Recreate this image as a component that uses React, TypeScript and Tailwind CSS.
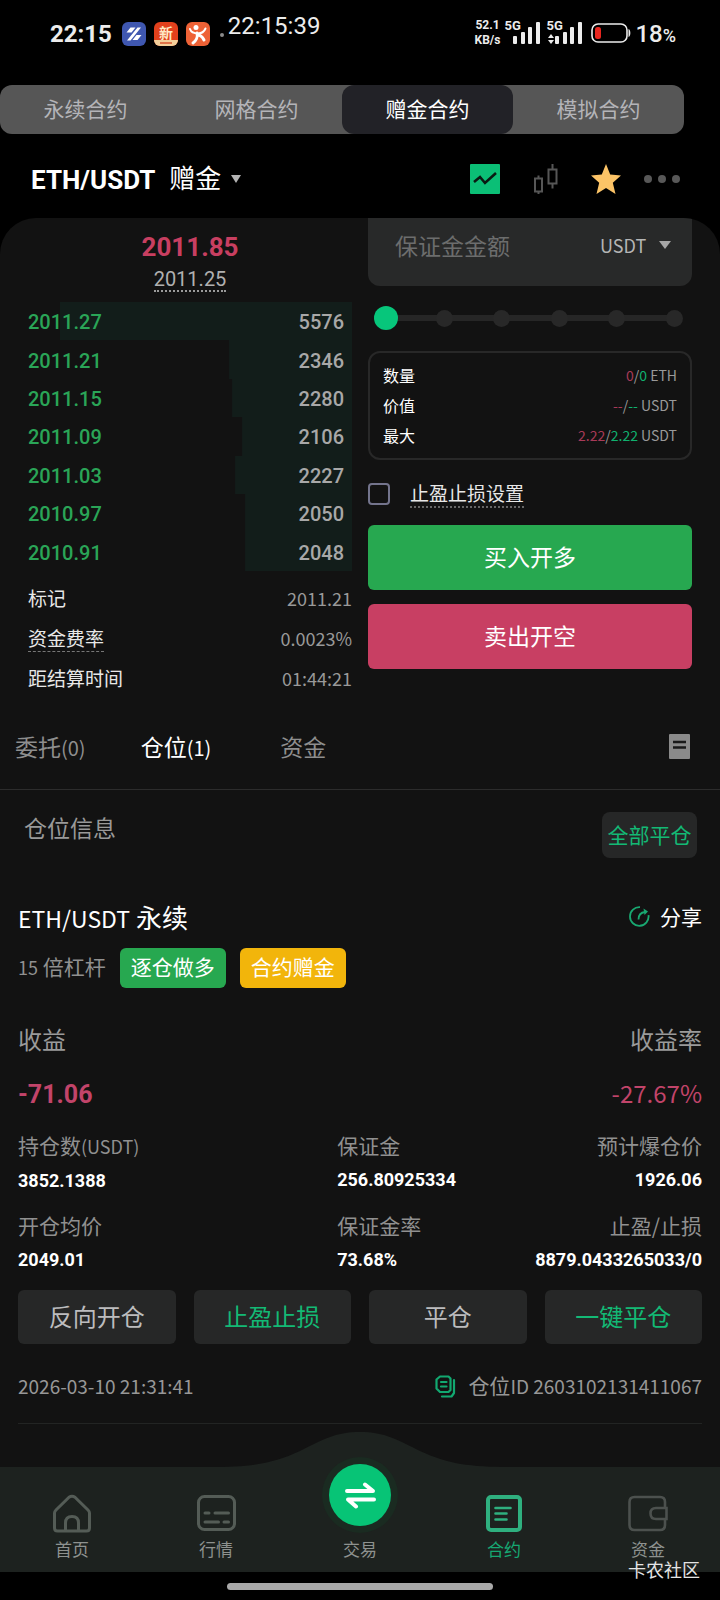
import React, { useState } from "react";

interface Order {
  price: string;
  amount: number;
  depth: number;
}

interface Cell {
  label: React.ReactNode;
  value: string;
}

const contractTabs = ["永续合约", "网格合约", "赠金合约", "模拟合约"];

const orders: Order[] = [
  { price: "2011.27", amount: 5576, depth: 90 },
  { price: "2011.21", amount: 2346, depth: 38 },
  { price: "2011.15", amount: 2280, depth: 37 },
  { price: "2011.09", amount: 2106, depth: 34 },
  { price: "2011.03", amount: 2227, depth: 36 },
  { price: "2010.97", amount: 2050, depth: 33 },
  { price: "2010.91", amount: 2048, depth: 33 },
];

const cells: Cell[] = [
  { label: <>持仓数<span className="text-[18px]">(USDT)</span></>, value: "3852.1388" },
  { label: "保证金", value: "256.80925334" },
  { label: "预计爆仓价", value: "1926.06" },
  { label: "开仓均价", value: "2049.01" },
  { label: "保证金率", value: "73.68%" },
  { label: "止盈/止损", value: "8879.0433265033/0" },
];

const actions = [
  { name: "反向开仓", green: false },
  { name: "止盈止损", green: true },
  { name: "平仓", green: false },
  { name: "一键平仓", green: true },
];

function Signal() {
  return (
    <svg width="27" height="22" viewBox="0 0 27 22" fill="#ececec">
      <rect x="0" y="14" width="4" height="8" rx="1" />
      <rect x="8" y="10" width="4" height="12" rx="1" />
      <rect x="15" y="5" width="4" height="17" rx="1" />
      <rect x="23" y="0" width="4" height="22" rx="1" />
    </svg>
  );
}

function StatusBar() {
  return (
    <div className="flex h-[85px] items-start justify-between pr-11 pl-[50px] font-[Roboto,'Noto_Sans_CJK_SC',sans-serif] text-[#ececec]">
      <div className="flex">
        <span className="mt-[18px] text-[24px] leading-8 font-bold">22:15</span>
        <svg className="mt-[22px] ml-2.5" width="24" height="24" viewBox="0 0 24 24">
          <rect width="24" height="24" rx="6" fill="#3f57b0" />
          <path d="M8.500 5.500h5l-4 5h-5zM15.500 5.500h3.500L8.500 18.500H5zM14.500 13h5l-4 5h-5z" fill="#fff" />
        </svg>
        <svg className="mt-[22px] ml-2" width="24" height="24" viewBox="0 0 24 24">
          <rect width="24" height="24" rx="6" fill="#e2401c" />
          <path d="M0 18h24a6 6 0 0 1-6 6H6a6 6 0 0 1-6-6z" fill="#f3cf9a" />
          <path d="M6 21h12" stroke="#d9542e" strokeWidth="1.500" />
          <text x="12" y="16" textAnchor="middle" fontSize="14" fontWeight="700" fill="#ffe9c4" fontFamily="Noto Sans CJK SC, sans-serif">新</text>
        </svg>
        <svg className="mt-[22px] ml-2" width="24" height="24" viewBox="0 0 24 24" fill="none" stroke="#fff" strokeLinecap="round">
          <rect width="24" height="24" rx="6" fill="#ee6236" stroke="none" />
          <circle cx="10" cy="5.500" r="2.500" fill="#fff" stroke="none" />
          <path d="M4 7c1 3 4 4.500 8 4.500 3 0 6-1.500 7.500-5" strokeWidth="2" />
          <path d="M11 11c1 4-1 8-4 10M11.500 13c3 0 5 2 6.500 5" strokeWidth="3" />
        </svg>
        <span className="mt-[33px] ml-2.5 size-1 rounded-full bg-[#8a8a8a]" />
        <span className="mt-2.5 ml-1 text-[24px] leading-8">22:15:39</span>
      </div>
      <div className="flex">
        <div className="mt-[18px] mr-1 text-[12px] leading-[15px] font-bold">
          <p className="text-center">52.1</p>
          <p>KB/s</p>
        </div>
        <div className="relative mt-[22px] pl-[9px]">
          <span className="absolute -top-1 left-0 text-[13px] leading-[15px] font-bold">5G</span>
          <Signal />
        </div>
        <div className="relative mt-[22px] ml-1.5 pl-[9px]">
          <span className="absolute -top-1 left-0 text-[13px] leading-[15px] font-bold">5G</span>
          <svg className="absolute top-3 left-0.5" width="6" height="10" viewBox="0 0 6 10" fill="#ececec">
            <path d="M3 0l3 4H0zM3 10l3-4H0z" />
          </svg>
          <Signal />
        </div>
        <svg className="mt-[23px] ml-[9px]" width="40" height="20" viewBox="0 0 40 20">
          <rect x="1" y="1" width="35" height="18" rx="6" fill="none" stroke="#ececec" strokeWidth="1.600" />
          <path d="M37.500 6c2.500 1 2.500 7 0 8z" fill="#ececec" />
          <rect x="4" y="4" width="6" height="12" rx="2.500" fill="#e8261f" />
        </svg>
        <span className="mt-[18px] ml-1 text-[24px] leading-8 font-medium">
          18<span className="text-[18px]">%</span>
        </span>
      </div>
    </div>
  );
}

function PairHeader() {
  return (
    <header className="flex h-[84px] items-center justify-between pt-1.5 pr-10 pl-[31px]">
      <h1 className="flex items-center text-[26px] leading-8 text-white">
        <span className="pt-0.5 font-[Roboto,sans-serif] font-bold">ETH/USDT</span>
        <span className="ml-3.5 pb-1">赠金</span>
        <svg className="ml-2.5" width="10" height="8" viewBox="0 0 10 8" fill="#b4b4b4">
          <path d="M0 0h10L5 8z" />
        </svg>
      </h1>
      <div className="flex items-center">
        <button aria-label="走势">
          <svg width="30" height="30" viewBox="0 0 30 30">
            <rect width="30" height="30" rx="1" fill="#0bbf76" />
            <path d="M4 18l6-5 5 6 11-10" fill="none" stroke="#0a1a12" strokeWidth="2.600" />
          </svg>
        </button>
        <button aria-label="K线" className="ml-[33px]">
          <svg width="26" height="30" viewBox="0 0 26 30" fill="none" stroke="#565656" strokeWidth="2">
            <path d="M2 14.500h7v13H2zM5.500 11.500v3M5.500 27.500v2.500M15.500 5.500h8v14h-8zM19.500 0v5.500M19.500 19.500v5" />
          </svg>
        </button>
        <button aria-label="收藏" className="ml-8">
          <svg width="30" height="30" viewBox="0 0 30 30" fill="#fcc467">
            <path d="M15 0l4.200 10.500L30 11.500l-8.200 7.200L24.500 30 15 24 5.500 30l2.700-11.300L0 11.500l10.800-1z" />
          </svg>
        </button>
        <button aria-label="更多" className="ml-[23px]">
          <svg width="36" height="8" viewBox="0 0 36 8" fill="#585858">
            <circle cx="4" cy="4" r="4" />
            <circle cx="18" cy="4" r="4" />
            <circle cx="32" cy="4" r="4" />
          </svg>
        </button>
      </div>
    </header>
  );
}

function OrderBook() {
  return (
    <div className="pt-3.5">
      <div className="flex flex-col items-center font-[Roboto,sans-serif]">
        <p className="text-[26px] leading-[30px] font-bold text-[#c83f61]">2011.85</p>
        <p className="mt-1.5 border-b-2 border-dotted border-[#9a9a9a] text-[20px] leading-[22px] text-[#b0b0b0]">2011.25</p>
      </div>
      <table className="mt-2.5 h-[269px] w-full font-[Roboto,sans-serif] text-[20px] leading-6 font-medium">
        <tbody>
          {orders.map((o) => (
            <tr
              key={o.price}
              style={{
                background: `linear-gradient(to left, #121d1a ${o.depth}%, transparent ${o.depth}%)`,
              }}
            >
              <td className="p-0 pt-0.5 text-[#2aa557]">{o.price}</td>
              <td className="p-0 pt-0.5 pr-2 text-right text-[#a8a8a8]">{o.amount}</td>
            </tr>
          ))}
        </tbody>
      </table>
      <dl className="mt-[7px] text-[19px] text-[#e8e8e8]">
        <div className="flex h-10 items-center justify-between">
          <dt>标记</dt>
          <dd className="text-[18px] text-[#999999]">2011.21</dd>
        </div>
        <div className="flex h-10 items-center justify-between">
          <dt className="border-b border-dashed border-[#777777] leading-[26px]">资金费率</dt>
          <dd className="text-[18px] text-[#999999]">0.0023%</dd>
        </div>
        <div className="flex h-10 items-center justify-between">
          <dt>距结算时间</dt>
          <dd className="text-[18px] text-[#999999]">01:44:21</dd>
        </div>
      </dl>
    </div>
  );
}

function OrderForm() {
  const [margin, setMargin] = useState<string>("");
  const [percent, setPercent] = useState<number>(0);
  const [stop, setStop] = useState<boolean>(false);

  return (
    <div>
      <div className="flex h-[68px] items-center rounded-b-xl bg-[#282929] pr-[21px] pb-3.5 pl-[27px]">
        <input
          aria-label="保证金金额"
          placeholder="保证金金额"
          value={margin}
          onChange={(e) => setMargin(e.target.value)}
          className="w-0 min-w-0 flex-1 bg-transparent text-[23px] leading-8 text-white outline-none placeholder:text-[#6c6d6d]"
        />
        <select aria-label="单位" className="appearance-none bg-transparent text-[18px] leading-8 text-[#b5b5b5] outline-none">
          <option>USDT</option>
        </select>
        <svg className="ml-3" width="12" height="8" viewBox="0 0 12 8" fill="#a6a6a6">
          <path d="M0 0h12L6 8z" />
        </svg>
      </div>

      <div className="relative mt-5 mr-[9px] ml-1.5 h-6">
        <div className="flex h-6 items-center justify-between bg-[linear-gradient(#262626,#262626)] bg-[length:96%_6px] bg-center bg-no-repeat pl-1">
          {[0, 20, 40, 60, 80, 100].map((n) => (
            <span key={n} className="size-[17px] rounded-full bg-[#282828]" />
          ))}
        </div>
        <input
          type="range"
          aria-label="仓位比例"
          min={0}
          max={100}
          value={percent}
          onChange={(e) => setPercent(Number(e.target.value))}
          className="absolute inset-0 h-6 w-full appearance-none bg-transparent [&::-webkit-slider-thumb]:size-6 [&::-webkit-slider-thumb]:appearance-none [&::-webkit-slider-thumb]:rounded-full [&::-webkit-slider-thumb]:bg-[#07c67b]"
        />
      </div>

      <dl className="mt-[21px] rounded-xl border-2 border-[#282828] px-[13px] pt-[7px] pb-2 text-[16px] leading-[30px] text-white">
        <div className="flex justify-between">
          <dt>数量</dt>
          <dd className="text-[14px] text-[#999999]">
            <span className="text-[#a83a58]">0</span>/<span className="text-[#10b06e]">0</span> ETH
          </dd>
        </div>
        <div className="flex justify-between">
          <dt>价值</dt>
          <dd className="text-[14px] text-[#999999]">
            <span className="text-[#a83a58]">--</span>/<span className="text-[#10b06e]">--</span> USDT
          </dd>
        </div>
        <div className="flex justify-between">
          <dt>最大</dt>
          <dd className="text-[14px] text-[#999999]">
            <span className="text-[#a83a58]">2.22</span>/<span className="text-[#10b06e]">2.22</span> USDT
          </dd>
        </div>
      </dl>

      <label className="mt-5 flex h-7 items-center gap-5 text-[19px] leading-[26px] text-[#e8e8e8]">
        <input
          type="checkbox"
          checked={stop}
          onChange={(e) => setStop(e.target.checked)}
          className="size-[22px] appearance-none rounded-[4px] border-2 border-[#73748c] checked:bg-[#07c67b]"
        />
        <span className="border-b-2 border-dotted border-[#666666]">止盈止损设置</span>
      </label>

      <div className="mt-[17px] flex flex-col gap-3.5 text-[23px] text-white">
        <button className="h-[65px] rounded-md bg-[#27a850] pb-0.5">买入开多</button>
        <button className="h-[65px] rounded-md bg-[#c83f63] pb-0.5">卖出开空</button>
      </div>
    </div>
  );
}

function Position() {
  return (
    <section className="px-[18px]">
      <div className="mt-[43px] flex h-8 items-center justify-between">
        <h2 className="text-[26px] leading-8 text-white">
          <span className="text-[23px]">ETH/USDT</span> 永续
        </h2>
        <button className="flex items-center gap-2.5 pb-0.5 text-[21px] leading-8 text-white">
          <svg width="21" height="21" viewBox="0 0 21 21" fill="none" stroke="#19a871" strokeWidth="1.800">
            <path d="M11 1.200a9.300 9.300 0 1 0 8.500 8" />
            <path d="M9.500 13.500c0-5 2-7 6.500-7.500" />
            <path d="M14.500 2.500l4.500 3-3.500 3.500z" fill="#19a871" stroke="none" />
          </svg>
          分享
        </button>
      </div>
      <div className="mt-[15px] flex h-10 items-center text-[21px]">
        <p className="pb-0.5 text-[#909090]">
          <span className="text-[18px]">15</span> 倍杠杆
        </p>
        <span className="ml-3.5 flex h-10 items-center rounded-md bg-[#27a850] px-[11px] pb-0.5 text-white">逐仓做多</span>
        <span className="ml-3.5 flex h-10 items-center rounded-md bg-[#f2b50b] px-[11px] pb-0.5 text-white">合约赠金</span>
      </div>
      <div className="mt-[33px] flex justify-between text-[24px] leading-9 text-[#9a9a9a]">
        <p>收益</p>
        <p>收益率</p>
      </div>
      <div className="mt-[18px] flex h-9 justify-between leading-9 text-[#c2446a]">
        <p className="pt-0.5 font-[Roboto,sans-serif] text-[25px] font-bold">-71.06</p>
        <p className="text-[24px]">-27.67%</p>
      </div>
      <dl className="mt-[18px] grid grid-cols-[7fr_4fr_4fr] gap-y-[11px]">
        {cells.map((c, i) => (
          <div key={i} className={i % 3 === 2 ? "text-right" : ""}>
            <dt className="text-[21px] leading-8 text-[#909090]">{c.label}</dt>
            <dd className="pt-0.5 font-[Roboto,sans-serif] text-[18px] leading-[34px] font-bold text-white">{c.value}</dd>
          </div>
        ))}
      </dl>
      <div className="mt-[13px] grid grid-cols-4 gap-[18px] text-[24px]">
        {actions.map((a) => (
          <button
            key={a.name}
            className={
              a.green
                ? "h-[54px] rounded-md bg-[#262727] pb-[3px] text-[#13b975]"
                : "h-[54px] rounded-md bg-[#262727] pb-[3px] text-[#bcbcbe]"
            }
          >
            {a.name}
          </button>
        ))}
      </div>
      <div className="mt-[27px] flex h-8 items-center justify-between pb-0.5 text-[19px] text-[#979797]">
        <time>2026-03-10 21:31:41</time>
        <p className="flex items-center">
          <button aria-label="复制" className="mr-3">
            <svg width="21" height="23" viewBox="0 0 21 23" fill="none" stroke="#12a870" strokeWidth="2.200" strokeLinecap="round" strokeLinejoin="round">
              <path d="M5 1.500h8.500l2 2V15l-2 2H5l-3.500-3.500v-9z" />
              <path d="M19 5v13l-2.500 3.500H7" />
              <path d="M6 7h5.500M6 11.500h5.500" />
            </svg>
          </button>
          <span><span className="text-[21px]">仓位</span>ID 2603102131411067</span>
        </p>
      </div>
      <hr className="mt-5 border-[#222423]" />
    </section>
  );
}

function BottomNav() {
  return (
    <nav className="relative mt-[43px] grid h-[105px] grid-cols-5 bg-[#1d221f] text-[17px] leading-6 text-[#8e928f]">
      <svg className="absolute -top-[35px] left-1/2 -translate-x-1/2" width="300" height="36" viewBox="0 0 300 36" fill="#1d221f">
        <path d="M0 36v-1C40 35 62 32 90 19C112 8 125 0 150 0S188 8 210 19C238 32 260 35 300 35v1z" />
      </svg>
      <a href="#home" className="flex flex-col items-center pt-[27px]">
        <svg width="38" height="39" viewBox="0 0 38 39" fill="none" stroke="#545c56" strokeWidth="3" strokeLinejoin="round">
          <path d="M16 3.200q3-2 6 0L35 16q1.500 1.500 1.500 3v15q0 3-3 3h-29q-3 0-3-3V19q0-1.500 1.500-3z" />
          <path d="M12.500 37v-8q0-6.500 6.500-6.500t6.500 6.500v8" />
        </svg>
        <span className="mt-1">首页</span>
      </a>
      <a href="#market" className="flex flex-col items-center pt-[27px]">
        <svg width="39" height="39" viewBox="0 0 39 39" fill="none" stroke="#545c56" strokeWidth="3" strokeLinecap="round">
          <rect x="1.500" y="2.500" width="36" height="33" rx="6" />
          <path d="M8 19h4M18 19h13.500M8 28h13.500M27 28h4.500" />
        </svg>
        <span className="mt-1">行情</span>
      </a>
      <a href="#trade" className="relative flex flex-col items-center">
        <span className="-mt-[3px] flex size-[62px] items-center justify-center rounded-full bg-[#07c476] ring-[7px] ring-[#1a2b21]">
          <svg width="31" height="27" viewBox="0 0 31 27" fill="none" stroke="#ffffff" strokeWidth="4" strokeLinecap="round" strokeLinejoin="round">
            <path d="M2 9h26L20 2.500M29 17.500H3L11 24.500" />
          </svg>
        </span>
        <span className="mt-[11px]">交易</span>
      </a>
      <a href="#contract" className="flex flex-col items-center pt-[27px] text-[#16a873]">
        <svg width="36" height="39" viewBox="0 0 36 39" fill="none" stroke="#2fb07f" strokeLinecap="round">
          <rect x="2" y="3" width="32" height="33" rx="3" strokeWidth="4" />
          <path d="M9.500 14h15M9.500 19.500h11M9.500 25.500h11" strokeWidth="2.600" />
        </svg>
        <span className="mt-1">合约</span>
      </a>
      <a href="#assets" className="flex flex-col items-center pt-[27px]">
        <svg width="40" height="39" viewBox="0 0 40 39" fill="none" stroke="#4c514e" strokeWidth="2.600">
          <path d="M37 14V8q0-5-5-5H6.500q-5 0-5 5v23q0 5 5 5H32q5 0 5-5v-6" />
          <path d="M38.500 14H28q-5.500 0-5.500 5.500T28 25h10.500z" />
        </svg>
        <span className="mt-1">资金</span>
      </a>
    </nav>
  );
}

export default function App() {
  const [tab, setTab] = useState<string>("赠金合约");

  return (
    <div className="w-full bg-black font-['Noto_Sans_CJK_SC',sans-serif]">
      <StatusBar />
      <div className="grid h-[49px] w-[95%] grid-cols-4 rounded-xl bg-[#565656] text-[21px]">
        {contractTabs.map((name) => (
          <button
            key={name}
            onClick={() => setTab(name)}
            className={
              name === tab
                ? "rounded-xl bg-[#222227] pb-0.5 text-white"
                : "rounded-xl pb-0.5 text-[#b4b4b8]"
            }
          >
            {name}
          </button>
        ))}
      </div>
      <PairHeader />
      <main className="overflow-hidden rounded-t-[36px] bg-[#121212]">
        <div className="grid grid-cols-2 gap-4 px-7">
          <OrderBook />
          <OrderForm />
        </div>

        <div className="mt-[11px] flex h-[81px] items-center border-b border-[#2c2c2c] pr-[30px] pb-1.5 pl-[15px] text-[23px] text-[#8e8e8e]">
          <button>委托<span className="text-[20px]">(0)</span></button>
          <button className="ml-[55px] text-white">仓位<span className="text-[20px]">(1)</span></button>
          <button className="ml-[69px]">资金</button>
          <button aria-label="历史" className="ml-auto">
            <svg width="21" height="25" viewBox="0 0 21 25">
              <rect width="21" height="25" rx="1" fill="#8a8a8a" />
              <path d="M4 8h13M4 13.500h13" stroke="#1a1a1a" strokeWidth="2.600" />
            </svg>
          </button>
        </div>

        <div className="flex items-start justify-between pt-[22px] pr-[23px] pl-6">
          <p className="text-[23px] leading-[30px] text-[#999999]">仓位信息</p>
          <button className="h-[46px] w-[95px] rounded-lg bg-[#262727] pb-[3px] text-[21px] leading-8 text-[#13b975]">全部平仓</button>
        </div>
        <Position />
        <BottomNav />
      </main>
      <footer className="relative flex h-[29px] items-center justify-center">
        <span className="h-[7px] w-[37%] rounded-full bg-[#a9a9a9]" />
        <span className="absolute -top-4 right-5 text-[18px] leading-[26px] text-[#e4e4e4]">卡农社区</span>
      </footer>
    </div>
  );
}
